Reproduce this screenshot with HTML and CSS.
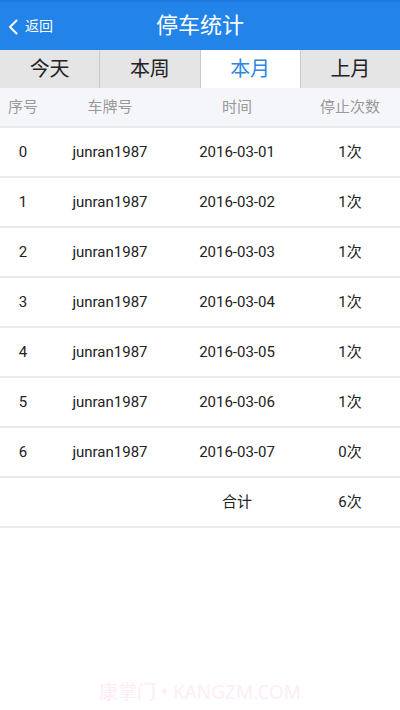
FILE: index.html
```html
<!DOCTYPE html>
<html lang="zh-CN">

<head>
    <meta charset="UTF-8">
    <meta name="viewport" content="width=device-width, initial-scale=1.0">
    <title>停车统计</title>
    <link rel="stylesheet" href="styles.css">
</head>

<body>
    <!-- Title Bar -->
    <header class="title-bar">
        <a class="back" href="#">
            <svg class="back-icon" width="10" height="16" viewBox="0 0 10 16">
                <path d="M8.5 1.5 L2 8 L8.5 14.5" fill="none" stroke="#fff" stroke-width="2" stroke-linecap="round" stroke-linejoin="round" />
            </svg>
            <span>返回</span>
        </a>
        <h1>停车统计</h1>
    </header>

    <!-- Tabs -->
    <nav class="tabs">
        <div class="tab">今天</div>
        <div class="tab">本周</div>
        <div class="tab active">本月</div>
        <div class="tab">上月</div>
    </nav>

    <!-- Table -->
    <div class="table">
        <div class="row head">
            <span>序号</span>
            <span>车牌号</span>
            <span>时间</span>
            <span>停止次数</span>
        </div>
        <div class="row">
            <span>0</span><span>junran1987</span><span>2016-03-01</span><span>1次</span>
        </div>
        <div class="row">
            <span>1</span><span>junran1987</span><span>2016-03-02</span><span>1次</span>
        </div>
        <div class="row">
            <span>2</span><span>junran1987</span><span>2016-03-03</span><span>1次</span>
        </div>
        <div class="row">
            <span>3</span><span>junran1987</span><span>2016-03-04</span><span>1次</span>
        </div>
        <div class="row">
            <span>4</span><span>junran1987</span><span>2016-03-05</span><span>1次</span>
        </div>
        <div class="row">
            <span>5</span><span>junran1987</span><span>2016-03-06</span><span>1次</span>
        </div>
        <div class="row">
            <span>6</span><span>junran1987</span><span>2016-03-07</span><span>0次</span>
        </div>
        <div class="row total">
            <span></span><span></span><span>合计</span><span>6次</span>
        </div>
    </div>

    <!-- Watermark -->
    <div class="watermark">康掌门 • KANGZM.COM</div>
</body>

</html>
```

FILE: styles.css
```css
body {
    margin: 0;
    padding: 0;
    width: 400px;
    height: 710px;
    background-color: #fff;
    font-family: Roboto, "Noto Sans CJK SC", sans-serif;
    position: relative;
    overflow: hidden;
}

.title-bar {
    height: 48px;
    border-top: 2px solid #1d79dc;
    background-color: #2284e9;
    display: flex;
    align-items: center;
    justify-content: center;
    position: relative;
}

.title-bar h1 {
    margin: 0;
    color: #fff;
    font-size: 22px;
    font-weight: normal;
    line-height: 24px;
}

.back {
    position: absolute;
    left: 8px;
    top: 0;
    height: 48px;
    display: flex;
    align-items: center;
    gap: 7px;
    color: #fff;
    text-decoration: none;
    font-size: 14px;
    line-height: 16px;
}

.back-icon {
    margin-top: 1px;
}

.tabs {
    display: flex;
    height: 38px;
    background-color: #e5e5e5;
}

.tab {
    flex: 1;
    display: flex;
    align-items: center;
    justify-content: center;
    font-size: 20px;
    line-height: 22px;
    color: #222;
    border-left: 1px solid #c9c9c9;
}

.tab:first-child {
    border-left: none;
}

.tab.active {
    background-color: #fff;
    color: #2b86e6;
}

.row {
    display: grid;
    grid-template-columns: 46px 128px 126px 100px;
    height: 48px;
    align-items: center;
    border-bottom: 2px solid #e9eaed;
    font-size: 15px;
    line-height: 18px;
    color: #222;
}

.row span {
    text-align: center;
    height: 18px;
}

.row.head {
    height: 38px;
    background-color: #f5f6fa;
    color: #999;
}

.watermark {
    position: absolute;
    left: 0;
    right: 0;
    top: 677px;
    text-align: center;
    font-size: 19px;
    color: #feedf9;
    font-family: "Noto Sans", "Noto Sans CJK SC", sans-serif;
}
```
